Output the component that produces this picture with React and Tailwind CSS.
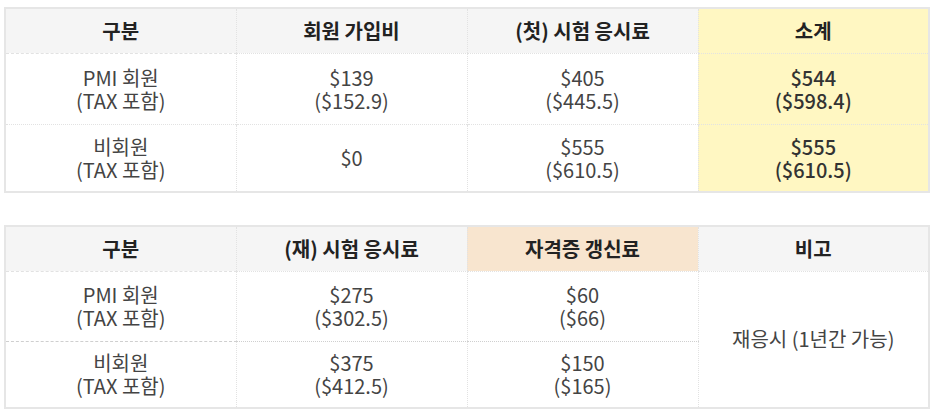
const font = { fontFamily: '"Noto Sans CJK KR", "Noto Sans", sans-serif' };

const first = [
  ['PMI 회원', '(TAX 포함)', '$139', '($152.9)', '$405', '($445.5)', '$544', '($598.4)'],
  ['비회원', '(TAX 포함)', '$0', null, '$555', '($610.5)', '$555', '($610.5)'],
];

function Cell({ a, b, className = '' }) {
  return (
    <td className={`text-center align-middle leading-[23px] ${className}`}>
      <div>{a}</div>
      {b && <div>{b}</div>}
    </td>
  );
}

const th = 'h-[45px] text-center align-middle font-bold text-[#222] border-b border-dashed border-[#e2e2e2]';
const vline = 'border-l border-dotted border-[#e2e2e2]';

export default function App() {
  return (
    <div className="bg-white w-[936px] h-[416px] pl-1 pt-[7px] text-[20px] text-[#444]" style={font}>
      <table className="w-[926px] table-fixed border-collapse border-2 border-[#e6e6e6]">
        <thead>
          <tr>
            <th className={`${th} bg-[#f5f5f5]`}>구분</th>
            <th className={`${th} ${vline} bg-[#f5f5f5]`}>회원 가입비</th>
            <th className={`${th} ${vline} bg-[#f5f5f5]`}>(첫) 시험 응시료</th>
            <th className={`${th} ${vline} bg-[#fff7c2]`}>소계</th>
          </tr>
        </thead>
        <tbody>
          {first.map((r, i) => (
            <tr key={i} className={i === 0 ? 'h-[71px] border-b border-dotted border-[#e2e2e2]' : 'h-[68px]'}>
              <Cell a={r[0]} b={r[1]} />
              <Cell a={r[2]} b={r[3]} className={vline} />
              <Cell a={r[4]} b={r[5]} className={vline} />
              <Cell a={r[6]} b={r[7]} className={`${vline} bg-[#fff7c2] font-medium text-[#333]`} />
            </tr>
          ))}
        </tbody>
      </table>

      <table className="mt-[32px] w-[926px] table-fixed border-collapse border-2 border-[#e6e6e6]">
        <thead>
          <tr>
            <th className={`${th} bg-[#f5f5f5]`}>구분</th>
            <th className={`${th} ${vline} bg-[#f5f5f5]`}>(재) 시험 응시료</th>
            <th className={`${th} ${vline} bg-[#f8e5cf]`}>자격증 갱신료</th>
            <th className={`${th} ${vline} bg-[#f5f5f5]`}>비고</th>
          </tr>
        </thead>
        <tbody>
          <tr className="h-[70px]">
            <Cell a="PMI 회원" b="(TAX 포함)" className="border-b border-dashed border-[#cfcfcf]" />
            <Cell a="$275" b="($302.5)" className={`${vline} border-b border-dashed border-b-[#cfcfcf]`} />
            <Cell a="$60" b="($66)" className={`${vline} border-b border-dashed border-b-[#cfcfcf]`} />
            <td rowSpan={2} className={`${vline} text-center align-middle`}>재응시 (1년간 가능)</td>
          </tr>
          <tr className="h-[67px]">
            <Cell a="비회원" b="(TAX 포함)" />
            <Cell a="$375" b="($412.5)" className={vline} />
            <Cell a="$150" b="($165)" className={vline} />
          </tr>
        </tbody>
      </table>
    </div>
  );
}
